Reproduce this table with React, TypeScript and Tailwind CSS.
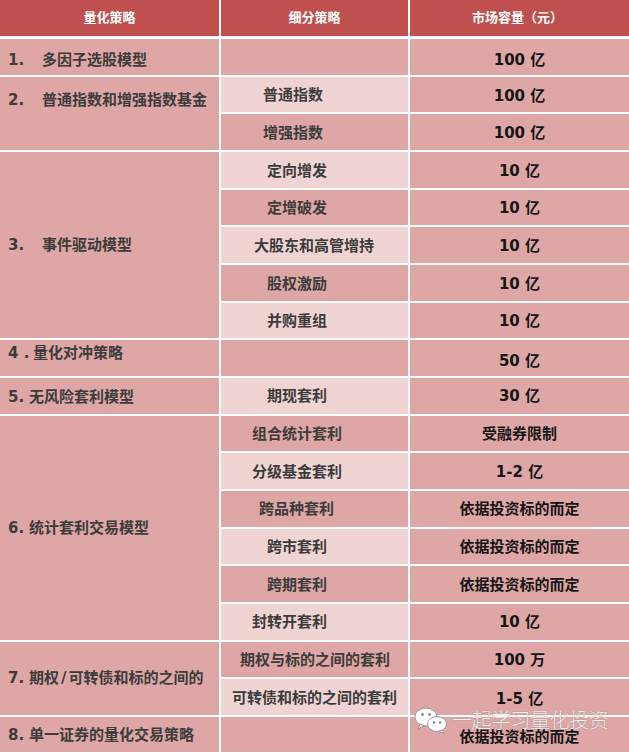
import React from "react";

const D = "bg-[#dea6a5]";
const L = "bg-[#f0d4d4]";

type Sub = { t: string; pl: string; light: boolean; v: string; pt: string };

const subs: Sub[] = [
  { t: "", pl: "pl-[40px]", light: false, v: "100 亿", pt: "pt-[6px]" },
  { t: "普通指数", pl: "pl-[42px]", light: true, v: "100 亿", pt: "pt-[3px]" },
  { t: "增强指数", pl: "pl-[42px]", light: false, v: "100 亿", pt: "pt-[2px]" },
  { t: "定向增发", pl: "pl-[46px]", light: true, v: "10 亿", pt: "pt-[2px]" },
  { t: "定增破发", pl: "pl-[46px]", light: false, v: "10 亿", pt: "pt-[2px]" },
  { t: "大股东和高管增持", pl: "pl-[33px]", light: true, v: "10 亿", pt: "pt-[2px]" },
  { t: "股权激励", pl: "pl-[46px]", light: false, v: "10 亿", pt: "pt-[2px]" },
  { t: "并购重组", pl: "pl-[46px]", light: true, v: "10 亿", pt: "pt-[2px]" },
  { t: "", pl: "pl-[40px]", light: false, v: "50 亿", pt: "pt-[6px]" },
  { t: "期现套利", pl: "pl-[46px]", light: true, v: "30 亿", pt: "pt-[2px]" },
  { t: "组合统计套利", pl: "pl-[31px]", light: false, v: "受融券限制", pt: "pt-[2px]" },
  { t: "分级基金套利", pl: "pl-[31px]", light: true, v: "1-2 亿", pt: "pt-[2px]" },
  { t: "跨品种套利", pl: "pl-[38px]", light: false, v: "依据投资标的而定", pt: "pt-[2px]" },
  { t: "跨市套利", pl: "pl-[46px]", light: true, v: "依据投资标的而定", pt: "pt-[2px]" },
  { t: "跨期套利", pl: "pl-[46px]", light: false, v: "依据投资标的而定", pt: "pt-[2px]" },
  { t: "封转开套利", pl: "pl-[31px]", light: true, v: "10 亿", pt: "pt-[2px]" },
  { t: "期权与标的之间的套利", pl: "pl-[19px]", light: false, v: "100 万", pt: "pt-[2px]" },
  { t: "可转债和标的之间的套利", pl: "pl-[11px]", light: true, v: "1-5 亿", pt: "pt-[4px]" },
  { t: "", pl: "pl-[40px]", light: false, v: "依据投资标的而定", pt: "pt-[6px]" },
];

const rowStart = [
  "row-start-1", "row-start-2", "row-start-3", "row-start-4", "row-start-5",
  "row-start-6", "row-start-7", "row-start-8", "row-start-9", "row-start-10",
  "row-start-11", "row-start-12", "row-start-13", "row-start-14", "row-start-15",
  "row-start-16", "row-start-17", "row-start-18", "row-start-19",
];

const font = "font-['DejaVu_Sans','Noto_Sans_CJK_SC',sans-serif]";

function WeChat() {
  return (
    <svg width="34" height="28" viewBox="0 0 34 28">
      <ellipse cx="12" cy="11" rx="11" ry="9" fill="#fff" stroke="#9a9a9a" strokeWidth="1" />
      <path d="M6 18 L4 23 L10 19.5 Z" fill="#fff" stroke="#9a9a9a" strokeWidth="1" />
      <circle cx="8.5" cy="8.5" r="1.4" fill="#888" />
      <circle cx="15.5" cy="8.5" r="1.4" fill="#888" />
      <ellipse cx="23" cy="18" rx="9.5" ry="7.5" fill="#fff" stroke="#9a9a9a" strokeWidth="1" />
      <path d="M28 24 L30 27.5 L25 25.3 Z" fill="#fff" stroke="#9a9a9a" strokeWidth="1" />
      <circle cx="20" cy="16.5" r="1.2" fill="#888" />
      <circle cx="26" cy="16.5" r="1.2" fill="#888" />
    </svg>
  );
}

export default function App() {
  const c1 = `${D} flex text-[15px] font-bold text-[#3c3c3c] pl-[8px] whitespace-nowrap`;
  return (
    <div className={`relative w-[629px] h-[754px] overflow-hidden bg-white ${font}`}>
      <div className="grid grid-cols-[219px_187px_219px] gap-x-[2px] h-[36px]">
        <div className="bg-[#c0504d] flex items-center justify-center text-white text-[13px] font-bold">量化策略</div>
        <div className="bg-[#c0504d] flex items-center justify-center text-white text-[13px] font-bold">细分策略</div>
        <div className="bg-[#c0504d] flex items-center justify-center text-white text-[13px] font-bold pr-[4px]">市场容量（元）</div>
      </div>
      <div className="mt-[3px] grid grid-cols-[219px_187px_219px] grid-rows-[repeat(19,35.67px)] gap-[2px]">
        <div className={`${c1} col-start-1 row-start-1 row-span-1 items-center pt-[7px]`}>
          <span className="inline-block w-[34px]">1.</span>多因子选股模型
        </div>
        <div className={`${c1} col-start-1 row-start-2 row-span-2 items-start pt-[12px]`}>
          <span className="inline-block w-[34px]">2.</span>普通指数和增强指数基金
        </div>
        <div className={`${c1} col-start-1 row-start-4 row-span-5 items-center`}>
          <span className="inline-block w-[34px]">3.</span>事件驱动模型
        </div>
        <div className={`${c1} col-start-1 row-start-9 row-span-1 items-center pb-[9px]`}>
          <span className="inline-block w-[25px]">4 .</span>量化对冲策略
        </div>
        <div className={`${c1} col-start-1 row-start-10 row-span-1 items-center pt-[3px]`}>
          <span className="inline-block w-[21px]">5.</span>无风险套利模型
        </div>
        <div className={`${c1} col-start-1 row-start-11 row-span-6 items-center pt-[2px]`}>
          <span className="inline-block w-[21px]">6.</span>统计套利交易模型
        </div>
        <div className={`${c1} col-start-1 row-start-17 row-span-2 items-center`}>
          <span className="inline-block w-[21px]">7.</span>期权<span className="px-[2px]">/</span>可转债和标的之间的
        </div>
        <div className={`${c1} col-start-1 row-start-19 row-span-1 items-center pt-[2px]`}>
          <span className="inline-block w-[21px]">8.</span>单一证券的量化交易策略
        </div>
        {subs.map((s, i) => (
          <React.Fragment key={i}>
            <div
              className={`${s.light ? L : D} col-start-2 ${rowStart[i]} flex items-center ${s.pl} text-[15px] font-bold text-[#3c3c3c] whitespace-nowrap pt-[2px]`}
            >
              {s.t}
            </div>
            <div
              className={`${D} col-start-3 ${rowStart[i]} flex items-center justify-center text-[15px] font-bold text-[#151515] whitespace-nowrap ${s.pt}`}
            >
              {s.v}
            </div>
          </React.Fragment>
        ))}
      </div>
      <div className="absolute left-[414px] top-[705px] flex items-center gap-[4px]">
        <WeChat />
        <span className="text-[20px] font-light text-white/90 font-['Noto_Sans_CJK_SC',sans-serif] [text-shadow:0_0_1px_#6f6f6f] tracking-[-0.5px]">
          一起学习量化投资
        </span>
      </div>
    </div>
  );
}
